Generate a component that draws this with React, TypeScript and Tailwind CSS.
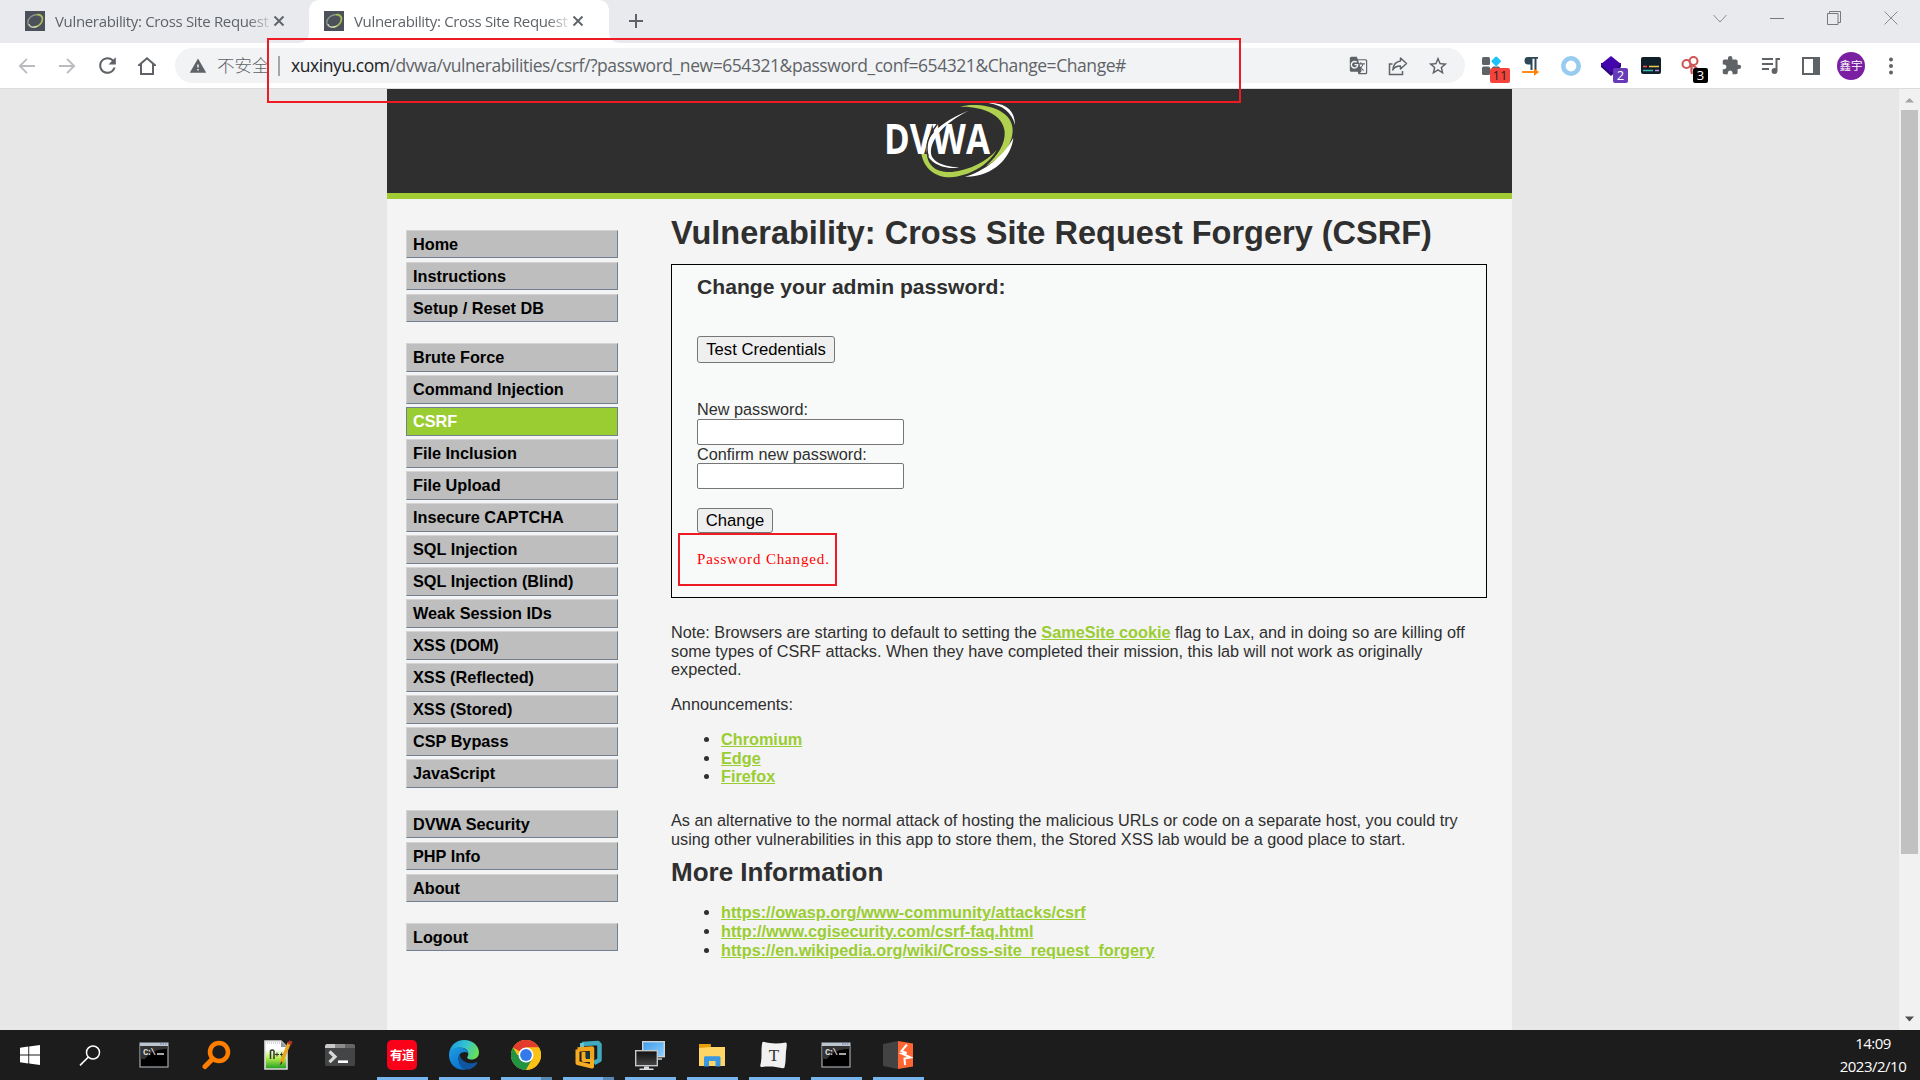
import React from "react";
import {
  MdArrowBack,
  MdArrowForward,
  MdRefresh,
  MdOutlineHome,
  MdStarBorder,
  MdExtension,
  MdQueueMusic,
  MdMoreVert,
  MdWarning,
  MdGTranslate,
} from "react-icons/md";

const UI = "font-['Open_Sans','Noto_Sans_CJK_SC',sans-serif]";

function Favicon() {
  return (
    <svg width="20" height="20" viewBox="0 0 20 20" className="shrink-0">
      <rect width="20" height="20" fill="#4b505a" />
      <ellipse cx="10" cy="10" rx="7.6" ry="5.8" transform="rotate(-28 10 10)" fill="none" stroke="#8f9784" strokeWidth="1.4" />
      <path d="M12 3.6c4.500-.6 6.800 2.600 5 6.600-1.300 3-4.300 5.600-8.500 6" fill="none" stroke="#a9c24a" strokeWidth="1.300" />
      <path d="M4 13c1 3.500 5 4 8.500 2" fill="none" stroke="#e8ecdf" strokeWidth="1" />
    </svg>
  );
}

function CloseX() {
  return (
    <svg width="12" height="12" viewBox="0 0 12 12" className="shrink-0">
      <path d="M1.500 1.500l9 9M10.500 1.500l-9 9" stroke="#5f6368" strokeWidth="1.900" />
    </svg>
  );
}

function Tab({ active }: { active?: boolean }) {
  return (
    <div
      className={
        "relative flex h-[43px] w-[300px] shrink-0 items-center rounded-t-[10px] pb-px pl-[15px] " +
        (active ? "bg-white" : "")
      }
    >
      {active && (
        <>
          <svg width="10" height="10" className="absolute bottom-0 left-[-10px]">
            <path d="M10 0v10H0A10 10 0 0 0 10 0z" fill="#fff" />
          </svg>
          <svg width="10" height="10" className="absolute right-[-10px] bottom-0">
            <path d="M0 0v10h10A10 10 0 0 1 0 0z" fill="#fff" />
          </svg>
        </>
      )}
      <Favicon />
      <div
        className={
          "ml-[10px] w-[219px] overflow-hidden text-[15px] leading-[22px] tracking-[-0.34px] whitespace-nowrap text-[#5f6368] [mask-image:linear-gradient(to_right,black_88%,transparent_100%)] " +
          UI
        }
      >
        Vulnerability: Cross Site Request Forgery
      </div>
      <div className="ml-[-1px] w-3">
        <CloseX />
      </div>
    </div>
  );
}

function TabStrip() {
  return (
    <div className="flex h-[43px] bg-[#e8eaed]">
      <div className="w-[10px] shrink-0" />
      <div className="w-[299px]">
        <Tab />
      </div>
      <Tab active />
      <svg width="16" height="16" viewBox="0 0 16 16" className="mt-[13px] ml-[19px]">
        <path d="M8 1v14M1 8h14" stroke="#5f6368" strokeWidth="2" />
      </svg>
      <div className="mt-[10px] ml-auto flex h-4 items-center gap-[43px] pr-[22px]">
        <svg width="14" height="14" viewBox="0 0 14 14">
          <path d="M.5 4l6.500 7 6.500-7" fill="none" stroke="#8a8c90" />
        </svg>
        <svg width="14" height="14" viewBox="0 0 14 14">
          <path d="M0 7.500h14" stroke="#77797d" />
        </svg>
        <svg width="14" height="14" viewBox="0 0 14 14">
          <path d="M.5 2.500h10.500v11H.5zM2.500 2.500V.5h11v11h-2.500" fill="none" stroke="#77797d" />
        </svg>
        <svg width="14" height="14" viewBox="0 0 14 14">
          <path d="M.5.5l13 13M13.500.5l-13 13" stroke="#8a8c90" />
        </svg>
      </div>
    </div>
  );
}

function Badge({ children, tone }: { children: React.ReactNode; tone: string }) {
  return (
    <span
      className={
        "absolute flex h-[15px] items-center justify-center rounded-[2px] text-[13px] leading-none font-['Open_Sans'] " +
        tone
      }
    >
      {children}
    </span>
  );
}

function Slot({ children }: { children: React.ReactNode }) {
  return <div className="relative flex h-[35px] w-10 shrink-0 items-center justify-center">{children}</div>;
}

function Extensions() {
  return (
    <div className="flex items-center">
      <Slot>
        <svg width="20" height="20" viewBox="0 0 20 20">
          <rect x="1" y="1" width="8" height="8" rx="1.500" fill="#5f6368" />
          <rect x="1" y="10.500" width="8" height="8.500" rx="1.500" fill="#5f6368" />
          <rect x="11" y="10.500" width="8" height="8.500" rx="1.500" fill="#5f6368" />
          <rect x="11.500" y="1.500" width="7.500" height="7.500" rx="1.500" transform="rotate(45 15.200 5.200)" fill="#1cc3fb" />
        </svg>
        <Badge tone="left-[19px] top-[20px] w-5 bg-[#f4433a] text-[#222]">11</Badge>
      </Slot>
      <Slot>
        <svg width="20" height="20" viewBox="0 0 20 20">
          <path d="M7 1h10v1.800h-1.500V14h-2V2.800h-2V14h-2V8.500H7.500A3.750 3.750 0 0 1 7 1z" fill="#2f4858" />
          <path d="M1 16h14" stroke="#ff8000" strokeWidth="1.800" />
          <path d="M13 12.500l5 3.500-5 3.800z" fill="#ff8000" />
        </svg>
      </Slot>
      <Slot>
        <svg width="22" height="22" viewBox="0 0 22 22">
          <circle cx="11" cy="11" r="7.700" fill="#fff" stroke="#97cbf0" strokeWidth="4.600" />
        </svg>
      </Slot>
      <Slot>
        <svg width="22" height="22" viewBox="0 0 22 22">
          <path d="M1 12l10 9 10-9V8H1z" fill="#2a0a7a" />
          <path d="M11 1l10 8-10 9L1 9z" fill="#4405ad" />
        </svg>
        <Badge tone="left-[22px] top-[20px] w-[15px] bg-[#673ab7] text-white">2</Badge>
      </Slot>
      <Slot>
        <svg width="20" height="18" viewBox="0 0 20 18">
          <rect width="20" height="17" rx="2" fill="#10202b" />
          <path d="M2 9.500h4" stroke="#ff5252" strokeWidth="1.500" />
          <path d="M8 9.500h10" stroke="#f7c948" strokeWidth="1.500" />
          <path d="M2 13.500h10" stroke="#3fb8af" strokeWidth="1.500" />
          <path d="M14 13.500h4" stroke="#c58fe0" strokeWidth="1.500" />
        </svg>
      </Slot>
      <Slot>
        <svg width="20" height="20" viewBox="0 0 20 20" fill="none" stroke="#cf5656" strokeWidth="2.100">
          <circle cx="5.500" cy="8" r="4" />
          <circle cx="12.500" cy="5" r="4" />
          <path d="M8.500 11c2-2 5-1 7 1l3 4M11 11c-1 2-1 4 0 7" />
        </svg>
        <Badge tone="left-[22px] top-[20px] w-[15px] bg-black text-white">3</Badge>
      </Slot>
      <Slot>
        <MdExtension size={21} color="#5f6368" />
      </Slot>
      <Slot>
        <svg width="20" height="18" viewBox="0 0 20 18">
          <path d="M1 2h11M1 7h11M1 12h7" stroke="#5f6368" strokeWidth="1.900" />
          <path d="M19 2h-3.500v11.500" fill="none" stroke="#5f6368" strokeWidth="2" />
          <circle cx="13.500" cy="14" r="2.900" fill="#5f6368" />
        </svg>
      </Slot>
      <Slot>
        <svg width="18" height="18" viewBox="0 0 18 18">
          <rect x="1" y="1" width="16" height="16" fill="#fff" stroke="#5f6368" strokeWidth="2" />
          <rect x="11" y="1" width="6" height="16" fill="#5f6368" />
        </svg>
      </Slot>
      <Slot>
        <div className="flex size-7 items-center justify-center rounded-full bg-[#7b1fa2] font-['Noto_Sans_CJK_SC',sans-serif] text-[11.500px] text-white">
          鑫宇
        </div>
      </Slot>
      <Slot>
        <svg width="6" height="20" viewBox="0 0 6 20" fill="#5f6368">
          <circle cx="3" cy="3.500" r="2" />
          <circle cx="3" cy="10" r="2" />
          <circle cx="3" cy="16.500" r="2" />
        </svg>
      </Slot>
    </div>
  );
}

function Toolbar() {
  return (
    <div className="flex h-[46px] items-center border-b border-[#dcdcdd] bg-white pl-[7px]">
      <Slot>
        <svg width="18" height="18" viewBox="0 0 18 18" fill="none" stroke="#b9bbbe" strokeWidth="1.800">
          <path d="M17 9H2M9 1.800L1.800 9 9 16.200" />
        </svg>
      </Slot>
      <Slot>
        <svg width="18" height="18" viewBox="0 0 18 18" fill="none" stroke="#b9bbbe" strokeWidth="1.800">
          <path d="M1 9h15M9 1.800L16.200 9 9 16.200" />
        </svg>
      </Slot>
      <Slot>
        <MdRefresh size={25} color="#5f6368" />
      </Slot>
      <Slot>
        <svg width="18" height="18" viewBox="0 0 18 18" fill="none" stroke="#5f6368" strokeWidth="2">
          <path d="M3 17V8H1.300L9 1.300 16.700 8H15v9z" />
        </svg>
      </Slot>
      <div className={"ml-2 flex h-[35px] w-[1290px] shrink-0 items-center rounded-full bg-[#f1f3f4] text-[17.5px] " + UI}>
        <MdWarning size={18} color="#5f6368" className="ml-[14px]" />
        <span className="ml-[10px] w-[54px] font-['Noto_Sans_CJK_SC',sans-serif] font-light text-[#5f6368]">不安全</span>
        <span className="ml-[7px] h-5 w-[2px] bg-[#a3a6aa]" />
        <span className="ml-[11px] w-[1047px] tracking-[-0.44px] whitespace-nowrap text-[#5f6368]">
          <span className="text-[#202124]">xuxinyu.com</span>
          /dvwa/vulnerabilities/csrf/?password_new=654321&amp;password_conf=654321&amp;Change=Change#
        </span>
        <div className="flex">
          <Slot>
            <MdGTranslate size={19} color="#5f6368" />
          </Slot>
          <Slot>
            <svg width="20" height="20" viewBox="0 0 20 20" fill="none" stroke="#5f6368" strokeWidth="1.500">
              <path d="M4.500 8H1.500v10.500h13V15" />
              <path d="M12.500 2l6 5.500-6 5.500V10C8.500 10 6 11.500 4.800 14c.5-5 3-8.500 7.700-9z" strokeLinejoin="round" />
            </svg>
          </Slot>
          <Slot>
            <MdStarBorder size={22} color="#5f6368" />
          </Slot>
        </div>
      </div>
      <div className="ml-[6px]">
        <Extensions />
      </div>
    </div>
  );
}

function Logo() {
  return (
    <svg width="180" height="110" viewBox="0 0 540 330">
      <path d="M325 62C240 95 180 150 205 200c15 25 55 38 92 33-47-3-82-18-84-43-3-40 37-90 112-128z" fill="#fff" />
      <text
        x="72"
        y="191"
        fontFamily="Open Sans"
        fontWeight="700"
        fontSize="124"
        fill="#fff"
        textLength="318"
        lengthAdjust="spacingAndGlyphs"
      >
        DVWA
      </text>
      <path d="M232 102C200 145 196 170 205 200" fill="none" stroke="#2f2f2f" strokeWidth="4" />
      <path d="M300 50C360 35 458 55 458 120c0 45-33 85-80 108 38-35 58-68 56-103C430 75 370 48 300 50z" fill="#b0d04f" />
      <path d="M184 192c8 43 41 70 86 70 60-4 115-37 140-82-30 35-80 60-135 66-50 2-70-20-75-54z" fill="#b0d04f" />
      <path d="M385 39c45-1 80 16 80 66-10-40-40-60-80-66z" fill="#fff" />
      <path d="M460 143c-5 57-60 119-145 117 55-15 115-60 145-117z" fill="#fff" />
    </svg>
  );
}

const MENU: { items: string[]; size: string; gap: string }[] = [
  { items: ["Home", "Instructions", "Setup / Reset DB"], size: "h-[28px] mb-[4px]", gap: "mb-[21px]" },
  {
    items: [
      "Brute Force",
      "Command Injection",
      "CSRF",
      "File Inclusion",
      "File Upload",
      "Insecure CAPTCHA",
      "SQL Injection",
      "SQL Injection (Blind)",
      "Weak Session IDs",
      "XSS (DOM)",
      "XSS (Reflected)",
      "XSS (Stored)",
      "CSP Bypass",
      "JavaScript",
    ],
    size: "h-[29px] mb-[3px]",
    gap: "mb-[22px]",
  },
  { items: ["DVWA Security", "PHP Info", "About"], size: "h-[28px] mb-[4px]", gap: "mb-[21px]" },
  { items: ["Logout"], size: "h-[28px] mb-[4px]", gap: "" },
];

function Menu() {
  return (
    <nav className="w-[212px] pt-[31px] text-[16.25px] font-bold">
      {MENU.map((g, i) => (
        <ul key={i} className={g.gap}>
          {g.items.map((t) => (
            <li
              key={t}
              className={
                "flex items-center border pl-[6px] " +
                g.size +
                (t === "CSRF"
                  ? " border-[#708090] bg-[#9acd32] text-white"
                  : " border-t-[#d3d3d3] border-r-[#708090] border-b-[#708090] border-l-[#d3d3d3] bg-[#bebebe] text-black")
              }
            >
              {t}
            </li>
          ))}
        </ul>
      ))}
    </nav>
  );
}

const LINK = "font-bold text-[#9acd32] underline";

function LinkList({ items }: { items: string[] }) {
  return (
    <ul className="list-disc pl-[50px]">
      {items.map((t) => (
        <li key={t} className="leading-[18.75px]">
          <a className={LINK}>{t}</a>
        </li>
      ))}
    </ul>
  );
}

function VulnerableArea() {
  return (
    <div className="relative mt-[12px] h-[334px] w-[816px] border border-black bg-[#f8faf9] px-[25px]">
      <h3 className="pt-[10px] text-[21.125px] leading-[24px] font-bold">Change your admin password:</h3>
      <button className="mt-[37px] block h-[27px] w-[138px] rounded-[3px] border border-[#767676] bg-[#efefef] text-[16.67px] leading-[24px] text-black">
        Test Credentials
      </button>
      <div className="mt-[37px] h-[19px] leading-[19px]">New password:</div>
      <div className="h-[26px] w-[207px] rounded-[2px] border border-[#767676] bg-white" />
      <div className="h-[18px] leading-[19px]">Confirm new password:</div>
      <div className="h-[26px] w-[207px] rounded-[2px] border border-[#767676] bg-white" />
      <button className="mt-[19px] block h-[25px] w-[76px] rounded-[3px] border border-[#767676] bg-[#efefef] text-[16.67px] leading-[22px] text-black">
        Change
      </button>
      <pre className="mt-[16px] font-['Liberation_Serif',serif] text-[15px] leading-[20px] tracking-[0.85px] text-[#ff0000]">
        Password Changed.
      </pre>
      <div className="absolute top-[268px] left-[6px] h-[53px] w-[159px] border-2 border-[#ed1c24]" />
    </div>
  );
}

function Main() {
  return (
    <main className="w-[816px] pt-[15px]">
      <h1 className="text-[32.5px] leading-[38px] font-bold">Vulnerability: Cross Site Request Forgery (CSRF)</h1>
      <VulnerableArea />
      <p className="mt-[25px] leading-[18.7px]">
        Note: Browsers are starting to default to setting the <a className={LINK}>SameSite cookie</a> flag to Lax, and in
        doing so are killing off
        <br />
        some types of CSRF attacks. When they have completed their mission, this lab will not work as originally
        <br />
        expected.
      </p>
      <p className="mt-[16px] mb-[16px] leading-[18.7px]">Announcements:</p>
      <LinkList items={["Chromium", "Edge", "Firefox"]} />
      <p className="mt-[25px] leading-[18.7px]">
        As an alternative to the normal attack of hosting the malicious URLs or code on a separate host, you could try
        <br />
        using other vulnerabilities in this app to store them, the Stored XSS lab would be a good place to start.
      </p>
      <h2 className="mt-[9px] mb-[16px] text-[26px] leading-[30px] font-bold">More Information</h2>
      <LinkList
        items={[
          "https://owasp.org/www-community/attacks/csrf",
          "http://www.cgisecurity.com/csrf-faq.html",
          "https://en.wikipedia.org/wiki/Cross-site_request_forgery",
        ]}
      />
    </main>
  );
}

function Page() {
  return (
    <div className="flex h-[941px] bg-[#e7e7e7] font-['Liberation_Sans',sans-serif] text-[16.25px] text-[#2f2f2f]">
      <div className="ml-[387px] w-[1125px] bg-[#f4f4f4]">
        <div className="flex h-[110px] justify-center overflow-hidden border-b-[6px] border-[#a1cc33] bg-[#2f2f2f] pt-px">
          <Logo />
        </div>
        <div className="flex gap-[53px] pl-[19px]">
          <Menu />
          <Main />
        </div>
      </div>
      <div className="ml-auto flex w-[21px] flex-col items-center bg-[#f1f1f1]">
        <svg width="21" height="21" viewBox="0 0 21 21">
          <path d="M6 13.500h9L10.500 9z" fill="#a3a3a3" />
        </svg>
        <div className="h-[744px] w-[17px] bg-[#c1c1c1]" />
        <svg width="21" height="21" viewBox="0 0 21 21" className="mt-auto">
          <path d="M6 7.500h9L10.500 12.500z" fill="#505050" />
        </svg>
      </div>
    </div>
  );
}

function CmdIcon() {
  return (
    <svg width="30" height="26" viewBox="0 0 30 26">
      <rect x="1" y="1" width="28" height="24" fill="#000" stroke="#a3a9ae" strokeWidth="1.200" />
      <path d="M1.500 4h27v3C20 7 12 9 6 17H1.500z" fill="#333" />
      <rect x="1" y="1" width="28" height="3" fill="#bcc6d0" />
      <path d="M21 2h7" stroke="#7f93b0" strokeWidth="1.500" strokeDasharray="1.500 1" />
      <text x="4" y="13" fontFamily="Liberation Mono" fontSize="9" fontWeight="700" fill="#ddd" textLength="13">
        C:\
      </text>
      <path d="M18 12h7" stroke="#fff" strokeWidth="1.300" />
    </svg>
  );
}

function WindowsIcon() {
  return (
    <svg width="20" height="20" viewBox="0 0 20 20" fill="#fff">
      <path d="M0 2.800L8.300 1.500v8H0zM9.200 1.400L20 0v9.500H9.200zM0 10.400h8.300v8.100L0 17.300zM9.200 10.400H20V20L9.200 18.600z" />
    </svg>
  );
}

function SearchIcon() {
  return (
    <svg width="22" height="22" viewBox="0 0 22 22" fill="none" stroke="#fff">
      <circle cx="14" cy="8.500" r="6.500" strokeWidth="1.500" />
      <path d="M9.400 13L1 21.400" strokeWidth="1.600" />
    </svg>
  );
}

function EverythingIcon() {
  return (
    <svg width="30" height="30" viewBox="0 0 30 30" fill="none" stroke="#ff7e00">
      <circle cx="18" cy="12" r="9" strokeWidth="4.500" />
      <path d="M11.500 19L4 26.500" strokeWidth="5" strokeLinecap="round" />
    </svg>
  );
}

function NotepadIcon() {
  return (
    <svg width="30" height="30" viewBox="0 0 30 30">
      <defs>
        <linearGradient id="npp" x1="0" y1="0" x2="0" y2="1">
          <stop offset="0.300" stopColor="#fff" />
          <stop offset="0.600" stopColor="#b6ef4f" />
          <stop offset="1" stopColor="#1f9a20" />
        </linearGradient>
      </defs>
      <path d="M2 1h16l6 6v22H2z" fill="url(#npp)" stroke="#dcdcdc" strokeWidth="1.600" />
      <path d="M18 1v6h6z" fill="#8f969c" />
      <path d="M4 3h14" stroke="#aaa" strokeDasharray="1 1" />
      <path d="M7.500 19v-8a2 2 0 0 1 3.500 0v8" fill="none" stroke="#333" strokeWidth="1.500" />
      <path d="M12 14.500h4M14 12.500v4M17 14.500h3.500M18.700 12.500v4" stroke="#333" strokeWidth="1" />
      <path d="M26.500 2.500L18 23" stroke="#e9a51e" strokeWidth="3.400" />
      <path d="M28 1l-1.500 3.500" stroke="#b53228" strokeWidth="3.400" />
      <path d="M18.500 21l-2 4.500 3-2.500z" fill="#333" />
    </svg>
  );
}

function TerminalIcon() {
  return (
    <svg width="30" height="22" viewBox="0 0 30 22">
      <rect width="30" height="22" rx="1.500" fill="#444546" />
      <path d="M1.500 0H10v4H0V1.500z" fill="#c9c9c9" />
      <path d="M10 0h10v4H10z" fill="#8c8c8c" />
      <path d="M20 0h8.500L30 1.500V4H20z" fill="#666" />
      <path d="M4.500 7.500l5.500 5.300-5.500 5.300" fill="none" stroke="#d8d8d8" strokeWidth="3.200" />
      <path d="M13 17.700h10" stroke="#fff" strokeWidth="2.600" />
    </svg>
  );
}

function EdgeIcon() {
  return (
    <svg width="30" height="30" viewBox="0 0 30 30">
      <defs>
        <linearGradient id="edgeTop" x1="0" y1="0.300" x2="1" y2="0.600">
          <stop offset="0" stopColor="#1a9be0" />
          <stop offset="0.500" stopColor="#35c3d3" />
          <stop offset="1" stopColor="#6be04e" />
        </linearGradient>
        <linearGradient id="edgeBody" x1="0" y1="0" x2="0.700" y2="1">
          <stop offset="0" stopColor="#1da0e4" />
          <stop offset="1" stopColor="#0b6cc8" />
        </linearGradient>
      </defs>
      <path d="M0 14C1 5.500 7 0 15 0c9 0 15 6 15 12.500 0 4.500-3.500 7-7.500 7-3 0-5-1.200-4-2.700 2-3 .5-8.300-5.500-9C7 7 1.500 9.500 0 14z" fill="url(#edgeTop)" />
      <path d="M0 15C0 10 5 7.500 10.500 7.500c5 0 8 2.500 8.500 5.500-6-3-11 2-9 8.500 1 4 4 7.500 8 8C7 31.500 0 24 0 15z" fill="url(#edgeBody)" />
      <path d="M10.500 14.500C7.500 20 11 29 18.500 29.600c4-.3 8-3 9.800-6.600.3-.7-.3-1.200-1-.8C20 25.500 11.500 21 10.500 14.500z" fill="#10559f" />
    </svg>
  );
}

function ChromeIcon() {
  return (
    <svg width="30" height="30" viewBox="0 0 30 30">
      <circle cx="15" cy="15" r="15" fill="#fbc116" />
      <path d="M15 15L2 7.500A15 15 0 0 1 28 7.500H15z" fill="#e33b2e" />
      <path d="M2 7.500A15 15 0 0 0 15 30l6.500-11.250L15 15H6.300z" fill="#229342" />
      <path d="M15 7.500h13A15 15 0 0 1 15 30l6.500-11.250z" fill="#fbc116" />
      <circle cx="15" cy="15" r="7.500" fill="#fff" />
      <circle cx="15" cy="15" r="5.900" fill="#3479ea" />
    </svg>
  );
}

function VmwareIcon() {
  return (
    <svg width="28" height="30" viewBox="0 0 28 30" fill="none">
      <path d="M8 4L24 3l1.500 1.500V20L20 23" stroke="#3fa9bf" strokeWidth="4.500" strokeLinejoin="round" />
      <path d="M8 3v6" stroke="#66c5d6" strokeWidth="4" />
      <path d="M3.500 9.500L18 8.500V22" stroke="#f0a31c" strokeWidth="4.500" strokeLinejoin="round" />
      <path d="M3.500 9.500V23l14.500 3.500V20H9.500V12" stroke="#f6ac22" strokeWidth="4" strokeLinejoin="round" />
      <path d="M12 12h4v7h-4z" fill="#123844" />
    </svg>
  );
}

function MonitorsIcon() {
  return (
    <svg width="30" height="30" viewBox="0 0 30 30">
      <defs>
        <linearGradient id="mon" x1="0" y1="0" x2="1" y2="1">
          <stop offset="0" stopColor="#3d9be8" />
          <stop offset="1" stopColor="#8fd0ff" />
        </linearGradient>
        <linearGradient id="monFront" x1="0" y1="0" x2="0" y2="1">
          <stop offset="0" stopColor="#111" />
          <stop offset="1" stopColor="#444" />
        </linearGradient>
      </defs>
      <rect x="7.700" y="1.700" width="21.600" height="15" fill="url(#mon)" stroke="#cdd3d8" strokeWidth="1.400" />
      <path d="M21 19h6" stroke="#cfd3d6" strokeWidth="1.500" />
      <rect x="0.700" y="10.700" width="21.600" height="15" fill="url(#monFront)" stroke="#c4c8cb" strokeWidth="1.400" />
      <path d="M9 26.500h5v2h4.500V30h-14v-1.500H9z" fill="#dcdfe1" />
    </svg>
  );
}

function FolderIcon() {
  return (
    <svg width="28" height="24" viewBox="0 0 28 24">
      <path d="M1 1h11.500v3H27v19H1z" fill="#ffd566" />
      <path d="M1 1h11.500v3L1 5z" fill="#e7a008" />
      <path d="M6 23.500V14l1-.8h14.500l1 .8v9.500H17.500V18h-6.500v5.500z" fill="#3b97e0" />
    </svg>
  );
}

function TyporaIcon() {
  return (
    <svg width="28" height="28" viewBox="0 0 28 28">
      <path d="M3.500.8c7.500 2 14 2 22.500.7 1 1 1 2 0 9-.5 6 0 10-1.500 16-.5.800-2 .8-3 .5-6-1.500-12-2-20.500-1-1.200-.5-.7-2 0-5 1-6 0-11 1-18 .3-1.500.5-2 1.500-2.200z" fill="#f1f1f1" />
      <text x="14" y="19.500" fontFamily="Liberation Serif" fontSize="17" fill="#333" textAnchor="middle">
        T
      </text>
    </svg>
  );
}

function BurpIcon() {
  return (
    <svg width="30" height="28" viewBox="0 0 30 28">
      <path d="M15 0v28L0 25V3z" fill="#434343" />
      <path d="M15 0l15 2.500v23L15 28z" fill="#ff6633" />
      <path d="M24 3.500L18.500 10l5 2-4.500.5 8.500 4-6 1 .5 6.500" fill="none" stroke="#fff" strokeWidth="2" />
    </svg>
  );
}

function YoudaoIcon() {
  return (
    <div className="flex size-[30px] items-center justify-center rounded-[5px] bg-[#fb0019] font-['Noto_Sans_CJK_SC',sans-serif] text-[12.500px] font-bold tracking-[-0.5px] text-white">
      有道
    </div>
  );
}

const TASKS: { icon: React.ReactNode; state?: "open" | "stack" }[] = [
  { icon: <WindowsIcon /> },
  { icon: <div className="-ml-1"><SearchIcon /></div> },
  { icon: <CmdIcon /> },
  { icon: <EverythingIcon /> },
  { icon: <NotepadIcon /> },
  { icon: <TerminalIcon /> },
  { icon: <YoudaoIcon />, state: "open" },
  { icon: <EdgeIcon />, state: "open" },
  { icon: <ChromeIcon />, state: "stack" },
  { icon: <VmwareIcon />, state: "stack" },
  { icon: <MonitorsIcon />, state: "open" },
  { icon: <FolderIcon />, state: "open" },
  { icon: <TyporaIcon />, state: "open" },
  { icon: <CmdIcon />, state: "open" },
  { icon: <BurpIcon />, state: "open" },
];

function Taskbar() {
  return (
    <div className="flex h-[50px] bg-[#1c1c1c]">
      <div className="-ml-px flex">
        {TASKS.map((t, i) => (
          <div key={i} className="flex w-[62px] flex-col items-center">
            <div className="flex h-[47px] items-center justify-center pt-[3px]">{t.icon}</div>
            {t.state && (
              <div className="flex h-[3px] w-[51px]">
                <div className="flex-1 bg-[#76b5ee]" />
                {t.state === "stack" && <div className="w-[11px] bg-[#5889b4]" />}
              </div>
            )}
          </div>
        ))}
      </div>
      <div className={"mr-[9px] ml-auto w-[76px] pt-[2px] text-center text-[15px] leading-[23px] tracking-[-0.5px] whitespace-nowrap text-white " + UI}>
        <div>14:09</div>
        <div>2023/2/10</div>
      </div>
    </div>
  );
}

export default function App() {
  return (
    <div className="relative flex h-[1080px] w-[1920px] flex-col overflow-hidden">
      <TabStrip />
      <Toolbar />
      <Page />
      <Taskbar />
      <div className="absolute top-[38px] left-[267px] h-[65px] w-[974px] border-2 border-[#ed1c24]" />
    </div>
  );
}
